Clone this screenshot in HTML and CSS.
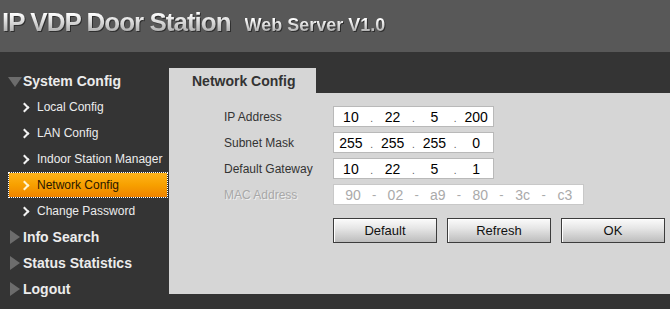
FILE: index.html
```html
<!DOCTYPE html>
<html lang="en">
<head>
  <meta charset="UTF-8">
  <title>IP VDP Door Station</title>
  <link rel="stylesheet" href="styles.css">
</head>
<body>
  <div class="header">
    <span class="title">IP VDP Door Station</span>
    <span class="subtitle">Web Server V1.0</span>
  </div>
  <div class="main">
    <div class="sidebar">
      <div class="menu-head open"><span class="tri"></span>System Config</div>
      <div class="menu-item"><span class="chev"></span>Local Config</div>
      <div class="menu-item"><span class="chev"></span>LAN Config</div>
      <div class="menu-item"><span class="chev"></span>Indoor Station Manager</div>
      <div class="menu-item active"><span class="chev"></span>Network Config</div>
      <div class="menu-item"><span class="chev"></span>Change Password</div>
      <div class="menu-head"><span class="tri"></span>Info Search</div>
      <div class="menu-head"><span class="tri"></span>Status Statistics</div>
      <div class="menu-head"><span class="tri"></span>Logout</div>
    </div>
    <div class="content">
      <div class="tab">Network Config</div>
      <div class="panel">
        <div class="form">
          <label>IP Address</label>
          <div class="ipbox">
            <span>10</span><i>.</i><span>22</span><i>.</i><span>5</span><i>.</i><span>200</span>
          </div>
          <label>Subnet Mask</label>
          <div class="ipbox">
            <span>255</span><i>.</i><span>255</span><i>.</i><span>255</span><i>.</i><span>0</span>
          </div>
          <label>Default Gateway</label>
          <div class="ipbox">
            <span>10</span><i>.</i><span>22</span><i>.</i><span>5</span><i>.</i><span>1</span>
          </div>
          <label class="disabled">MAC Address</label>
          <div class="ipbox mac">
            <span>90</span><i>-</i><span>02</span><i>-</i><span>a9</span><i>-</i><span>80</span><i>-</i><span>3c</span><i>-</i><span>c3</span>
          </div>
        </div>
        <div class="buttons">
          <button>Default</button>
          <button>Refresh</button>
          <button>OK</button>
        </div>
      </div>
    </div>
  </div>
</body>
</html>
```

FILE: styles.css
```css
* {
  box-sizing: border-box;
  margin: 0;
  padding: 0;
  font-family: 'Liberation Sans', Arial, sans-serif;
}
body {
  background: #343434;
  color: #333;
  height: 309px;
  overflow: hidden;
}
.header {
  height: 52px;
  background: #585858;
  padding-left: 2px;
  display: flex;
  align-items: baseline;
  padding-top: 7px;
  gap: 14px;
}
.title,
.subtitle {
  font-weight: 700;
  background: linear-gradient(#ffffff 20%, #9a9a9a 95%);
  -webkit-background-clip: text;
  background-clip: text;
  color: transparent;
  filter: drop-shadow(1px 1px 0 #2e2e2e);
}
.title {
  font-size: 26px;
  letter-spacing: -1px;
}
.subtitle {
  font-size: 18px;
}
.main {
  display: flex;
  padding-top: 16px;
}
.sidebar {
  width: 169px;
  padding-left: 8px;
  flex-shrink: 0;
}
.menu-head,
.menu-item {
  height: 26px;
  width: 160px;
  display: flex;
  align-items: center;
  color: #ececec;
  white-space: nowrap;
}
.menu-head {
  font-size: 14px;
  font-weight: 700;
}
.tri {
  width: 15px;
  height: 14px;
  position: relative;
  flex-shrink: 0;
}
.tri::before {
  content: "";
  position: absolute;
  left: 2px;
  top: 0;
  border-style: solid;
  border-width: 7px 0 7px 10px;
  border-color: transparent transparent transparent #6c6c6c;
}
.open .tri::before {
  left: 0;
  top: 3px;
  border-width: 10px 7px 0 7px;
  border-color: #6c6c6c transparent transparent transparent;
}
.menu-item {
  font-size: 12px;
  padding-left: 15px;
}
.chev {
  width: 6px;
  height: 9px;
  margin-right: 8px;
  position: relative;
}
.chev::before {
  content: "";
  position: absolute;
  left: -2px;
  top: 1px;
  width: 5px;
  height: 5px;
  border-top: 2px solid #f2f2f2;
  border-right: 2px solid #f2f2f2;
  transform: rotate(45deg);
}
.menu-item.active {
  border: 1px dotted #ffffff;
  background: linear-gradient(#ffb41a, #f7a000 50%, #ef8400);
  background-clip: padding-box;
  color: #2a1700;
  padding-left: 14px;
}
.menu-item.active .chev::before {
  border-color: #fff4d0;
}
.content {
  flex: 1;
}
.tab {
  width: 147px;
  height: 25px;
  background: #d6d6d6;
  font-size: 14px;
  font-weight: 700;
  color: #333;
  padding-left: 23px;
  display: flex;
  align-items: center;
}
.panel {
  height: 201px;
  background: #d6d6d6;
  padding: 13px 0 0 55px;
}
.form {
  display: grid;
  grid-template-columns: 109px auto;
  grid-auto-rows: 21px;
  row-gap: 5px;
  align-items: center;
}
.form label {
  font-size: 12px;
  color: #333;
}
.form label.disabled {
  color: #a8a8a8;
  text-shadow: 1px 1px 0 #eeeeee;
}
.ipbox {
  width: 161px;
  height: 21px;
  background: #fff;
  border: 1px solid #b9b9b9;
  display: flex;
  align-items: center;
  font-size: 14px;
  color: #000;
}
.ipbox span {
  width: 34px;
  text-align: center;
}
.ipbox i {
  font-style: normal;
  width: 8px;
  text-align: center;
  font-size: 10px;
  color: #555;
  position: relative;
  top: 2px;
}
.ipbox.mac {
  width: 251px;
  color: #aaaaaa;
  border-color: #c8c8c8;
  padding-left: 2px;
}
.ipbox.mac i {
  width: 8.4px;
  font-size: 13px;
  color: #aaaaaa;
  top: 0;
}
.buttons {
  display: flex;
  gap: 10px;
  margin: 13px 0 0 109px;
}
button {
  width: 104px;
  height: 25px;
  border: 1px solid #3c3c3c;
  background: linear-gradient(#fbfbfb, #e6e6e6 40%, #bdbdbd);
  box-shadow: inset 1px 1px 0 #ffffff;
  font-size: 13px;
  color: #111;
  cursor: pointer;
}
```
